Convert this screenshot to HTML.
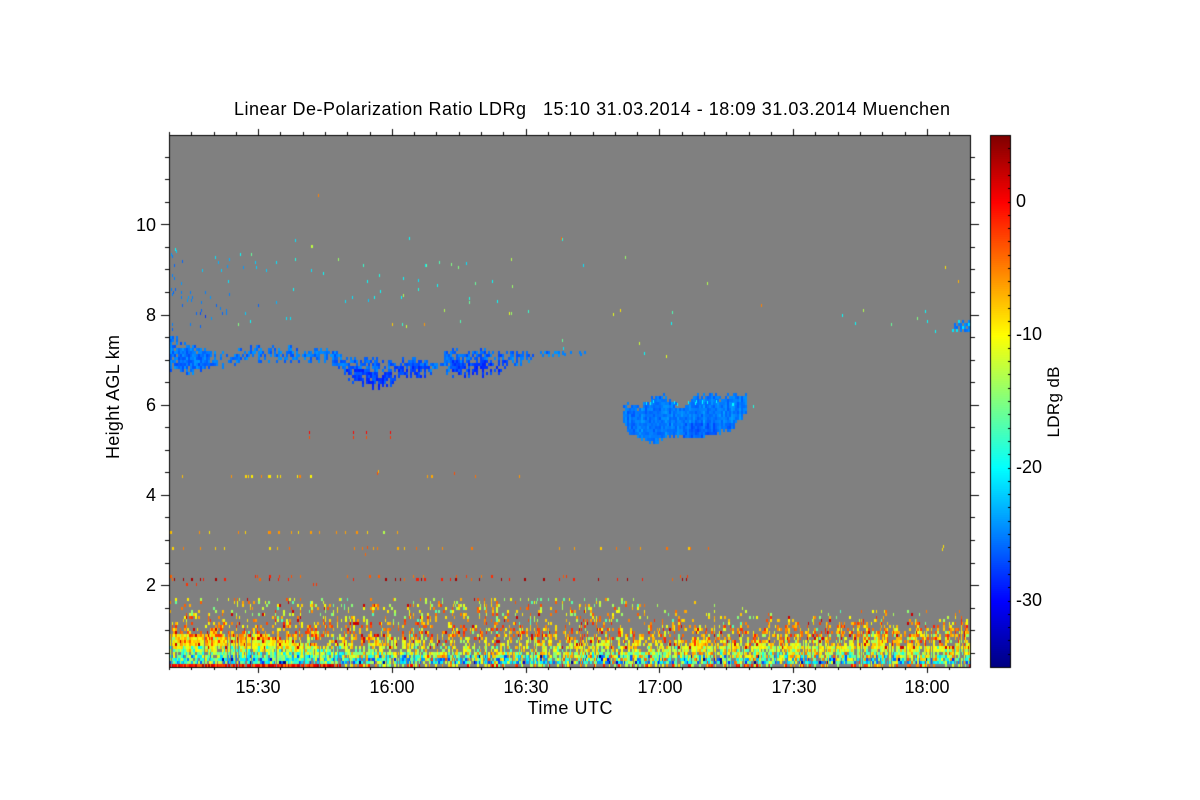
<!DOCTYPE html>
<html><head><meta charset="utf-8"><title>LDRg</title>
<style>
html,body{margin:0;padding:0;background:#fff;width:1200px;height:800px;overflow:hidden}
canvas,svg{position:absolute;left:0;top:0}
text{font-family:"Liberation Sans",sans-serif;font-size:18px;fill:#000}
</style></head><body>
<canvas id="c" width="1200" height="800"></canvas>
<svg width="1200" height="800" viewBox="0 0 1200 800">
<text x="234" y="115" textLength="292" style="font-size:18px">Linear De-Polarization Ratio LDRg</text>
<text x="543" y="115" textLength="407" style="font-size:18px">15:10 31.03.2014 - 18:09 31.03.2014 Muenchen</text>
<g text-anchor="end"><text x="156" y="231">10</text><text x="156" y="321">8</text><text x="156" y="411">6</text><text x="156" y="501">4</text><text x="156" y="591">2</text></g>
<g text-anchor="middle"><text x="258" y="693">15:30</text><text x="392" y="693">16:00</text><text x="526" y="693">16:30</text><text x="660" y="693">17:00</text><text x="794" y="693">17:30</text><text x="927" y="693">18:00</text>
<text x="570" y="714" textLength="85">Time UTC</text>
<text transform="translate(119 397) rotate(-90)" textLength="124">Height AGL km</text>
<text transform="translate(1059 402) rotate(-90)" textLength="71" style="font-size:17px">LDRg dB</text></g>
<text x="1016" y="207">0</text><text x="1016" y="340">-10</text><text x="1016" y="473">-20</text><text x="1016" y="606">-30</text>
</svg>
<script>
(function(){
var g=document.getElementById('c').getContext('2d');
var s=12345;function R(){s|=0;s=s+0x6D2B79F5|0;var t=Math.imul(s^s>>>15,1|s);t=t+Math.imul(t^t>>>7,61|t)^t;return((t^t>>>14)>>>0)/4294967296;}
function cl(v){return v<0?0:v>1?1:v;}
function jet(db){var t=cl((db+35)/40);return 'rgb('+Math.round(cl(1.5-Math.abs(4*t-3))*255)+','+Math.round(cl(1.5-Math.abs(4*t-2))*255)+','+Math.round(cl(1.5-Math.abs(4*t-1))*255)+')';}
function rect(x,y,w,h,c){g.fillStyle=c;g.fillRect(x,y,w,h);}
rect(0,0,1200,800,'#fff');
rect(169,135,802,532,'#808080');
function itp(a,x){for(var i=0;i<a.length-1;i++){if(x>=a[i][0]&&x<=a[i+1][0]){var f=(x-a[i][0])/(a[i+1][0]-a[i][0]);return [a[i][1]+f*(a[i+1][1]-a[i][1]),a[i][2]+f*(a[i+1][2]-a[i][2])];}}return null;}
/* cloud 1 */
var c1=[[170,332,374],[180,340,374],[200,345,372],[215,348,368],[230,347,366],[250,345,363],[270,345,362],[300,345,363],[320,345,361],[335,350,366],[345,355,384],[360,357,388],[375,358,392],[385,358,394],[395,358,382],[410,358,382],[425,358,380],[437,360,372],[441,362,368],[445,349,376],[460,349,382],[475,349,380],[490,349,378],[505,351,374],[520,351,366],[535,349,362],[548,350,360],[560,352,358]];
var x,y;
for(x=170;x<560;x+=2){var e=itp(c1,x);if(!e)continue;var c=(e[0]+e[1])/2,h=(e[1]-e[0])/2,cd=.3+R()*.6;
 if(x<210)cd+=.3;
 if(x>225&&x<345)cd*=.85;
 if(x>520)cd*=.8;
 var run=0;
 for(y=Math.round(e[0]/3)*3;y<e[1];y+=3){var cc=y-(x<340?c-1:c-3),d=Math.abs(cc)/h;var p=(1-d*d)*cd;if(run)p+=.15;
  if(R()<p){run=1;var base=(x>345&&x<430)||(x>450&&x<510)?(cc>-2?-27.5:-26):-25.5;rect(x,y,2,3,jet(base+(R()-.5)*3));}else run=0;}}
for(var i=0;i<34;i++){x=560+R()*30|0;if(R()<.2){rect(x,351+R()*4|0,2,3,jet(-25));}}
/* cloud 2 */
var c2=[[623,405,422],[628,403,432],[637,405,437],[647,402,440],[653,395,445],[663,394,437],[670,397,437],[675,403,436],[680,406,436],[687,401,438],[697,393,438],[707,395,436],[713,392,435],[723,397,432],[730,392,430],[740,392,421],[747,392,410]];
for(x=623;x<747;x+=2){var e=itp(c2,x);if(!e)continue;var cb=R()*1.6-.8;
 for(y=Math.round(e[0]/3)*3;y<e[1];y+=3){var m=Math.min(y-e[0],e[1]-y),p=m>4?1:.5+m*.1;
  if(R()<p){rect(x,y,2,3,jet(-25.2+cb+(R()-.5)*1.8-(y>422&&x>680?.8:0)));}}}
for(var i=0;i<14;i++){rect(628+R()*118|0,Math.round(400+R()*4),1,3,jet(-20));}
/* right-edge cloud */
for(x=946;x<970;x+=2){for(y=320;y<332;y+=3){if(R()<(x-946)/36+.12)rect(x,y,2,3,jet(R()<.25?-21:-26+R()*2));}}
/* high speckles from zoom coords */
var Z=[[391,28,-10],[442,46,-13],[733,20,-9],[1189,20,-4],[30,53,-20],[33,60,-22],[18,70,-24],[22,75,-25],[52,90,-26],[28,101,-26],[151,78,-21],[160,94,-23],[193,85,-23],[226,70,-20],[259,70,-16],[270,94,-22],[334,94,-21],[391,85,-19],[520,85,-14],[595,101,-18],[784,101,-16],[823,94,-17],[880,109,-15],[1039,85,-12],[1255,101,-7],[112,118,-22],[169,118,-22],[187,106,-24],[235,109,-24],[274,109,-22],[304,118,-22],[439,118,-21],[475,126,-20],[643,133,-19],[715,142,-20],[22,133,-25],[28,142,-25],[190,150,-21],[607,150,-20],[931,157,-16],[1042,166,-14],[49,157,-24],[18,175,-25],[30,175,-26],[25,183,-26],[49,183,-25],[76,183,-25],[121,183,-25],[193,190,-25],[385,175,-20],[760,175,-19],[22,190,-25],[49,199,-25],[82,199,-25],[70,199,-24],[65,206,-24],[79,206,-25],[136,199,-24],[562,199,-21],[628,199,-20],[610,206,-22],[709,199,-20],[109,214,-25],[334,214,-23],[913,214,-16],[52,223,-26],[154,223,-26],[280,223,-26],[838,238,-13],[109,238,-26],[166,230,-25],[184,238,-25],[94,247,-26],[106,247,-27],[172,247,-26],[184,247,-25],[241,247,-22],[1033,247,-11],[121,255,-28],[139,262,-24],[256,271,-20],[364,262,-21],[376,262,-21],[220,278,-15],[712,278,-18],[778,278,-6],[22,279,-25],[76,279,-25],[106,285,-26],[22,295,-26]];
Z.forEach(function(a){rect(165+Math.round(a[0]/3),230+Math.round(a[1]/3),1,3,jet(a[2]));});
[[318,194,-5],[295,239,-21],[311,245,-12],[409,237,-20],[562,238,-19],[625,256,-14],[583,264,-21],[511,258,-13],[466,262,-21],[707,282,-13],[761,304,-5],[620,309,-9],[613,313,-11],[672,311,-17],[671,322,-20],[842,314,-20],[863,309,-13],[925,310,-20],[917,317,-15],[891,323,-16],[855,322,-20],[562,339,-16],[639,342,-12],[644,352,-20],[666,355,-11],[563,347,-21],[444,309,-13],[469,297,-19],[497,300,-20],[528,310,-18],[511,312,-14],[492,280,-20],[451,263,-15],[437,284,-20],[425,264,-21],[403,294,-13],[418,279,-21],[945,266,-9],[958,280,-7],[753,405,-19],[345,300,-21],[380,290,-20],[927,320,-20],[935,330,-20],[392,323,-8],[460,320,-17],[406,325,-12],[309,436,-3],[353,436,-2],[366,436,-3],[390,436,-2],[378,470,-7],[943,545,-9],[942,548,-9],[365,553,-4],[367,546,-3]].forEach(function(a){rect(a[0],a[1],1,3,jet(a[2]));});
/* aerosol rows */
function row(yy,xs,f){xs.forEach(function(v){rect(v,yy,R()<.3?2:1,3,jet(f()));});}
function or(){return -4-R()*5;}
function rd(){var r=R();return r<.5?3.5:r<.8?-1:-4;}
row(475,[182,231,245,248,251,261,268,270,277,280,297,299,310,427,431,475,519],function(){return -10+R()*6;});
row(472,[377,454],function(){return -3;});
row(431,[309,353,366,390],function(){return 0;});
row(531,[170,199,209,238,245,268,269,278,291,298,310,319,336,345,356,367,397],or);
rect(383,531,2,3,jet(-13));
row(547,[172,183,200,215,224,269,277,289,354,362,373,377,397,404,416,428,442,471,559,574,600,616,629,640,666,688,690,708],or);
row(578,[172,174,183,191,200,203,215,224,259,269,278,288,353,385,395,400,404,416,418,421,424,441,450,455,471,479,501,509,524,543,559,573,598,617,627,642,672,682,686],rd);
row(575,[170,255,257,269,279,291,300,347,369,378,413,423,456,466,481,491,563,566,680,687],function(){return -1-R()*4;});
row(583,[186,196,313,316],function(){return -2;});
/* low-level aerosol */
function top(x){return x<640?597:x<730?600:x<800?605:610;}
function dt(x){return x<260?632:x<340?632+(x-260)*.25:x<640?652:x<680?652-(x-640)*.175:645;}
x=170;
while(x<970){var w=R()<.45?1:2,prev=false,tp=top(x),dT=dt(x),shift=Math.round((R()-.5)*10);
 if(x+w>970)w=970-x;
 for(y=664;y>=tp;y-=3){var p,m,sp,yy=y>=663?y:Math.min(662,y+shift);
  if(y>=663){if(x<340){p=.97;m=-1;sp=4;}else{p=.45;m=-8;sp=9;}}
  else if(yy>=658){p=.88;m=-19;sp=9;if(R()<.12)m=-30;}
  else if(yy>=655){p=.85;if(x>390){m=-6;sp=4;if(R()<.35)m=-17;}else{m=-17;sp=5;}}
  else if(yy>=648){p=y>=dT?.86:.55;m=x<340?-15:-12;sp=6;}
  else if(yy>=640){p=y>=dT?.85:.42;m=-10;sp=4;}
  else if(yy>=630){p=y>=dT?.82:(x>800?.55:x>640?.4:.32);m=R()<.3?-11:-5;sp=4;}
  else if(yy>=620){p=x>800?.25:.2;m=-6;sp=5;}
  else if(yy>=606){p=x>640?.06:.16;m=-9;sp=7;}
  else{p=x>640?.04:.13;m=-10;sp=7;}
  if(prev&&y<648)p+=.2;
  prev=R()<p;
  if(prev){var db=m+(R()-.5)*2*sp;var q=R();if(y<648&&q<.06)db=2;else if(y<640&&q<.08)db=-17;
   rect(x,y,w,3,jet(db));}
 }
 x+=w+(R()<.12?1:0);}
/* axes */
var K='#000';
rect(169,135,802,1,K);rect(169,667,802,1,K);rect(169,135,1,533,K);rect(970,135,1,533,K);
for(var i=0;i<=36;i++){var tx=Math.round(169+i*22.29);var mj=i%6==4;var L=mj?6:3;
 if(tx>970)break;
 rect(tx,135-L,1,L,K);rect(tx,668,1,mj?5:2,K);}
for(var k=-10;k<=22;k++){var ty=Math.round(224.3+k*22.55);if(ty<=136||ty>=666)continue;var mj=(k%4+4)%4==0;
 rect(mj?161:165,ty,mj?8:4,1,K);rect(971,ty,mj?8:4,1,K);}
/* colour bar */
for(y=135;y<667;y+=2){var db=5-(y-135)/13.3;rect(990,y,20,2,jet(db));}
rect(990,135,21,1,K);rect(990,667,21,1,K);rect(990,135,1,533,K);rect(1010,135,1,533,K);
for(var k=1;k<40;k++){rect(1008,Math.round(135+k*13.3),2,1,K);}
})();
</script>
</body></html>
